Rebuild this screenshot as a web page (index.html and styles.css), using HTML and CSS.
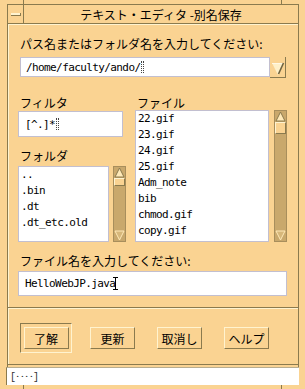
FILE: index.html
```html
<!DOCTYPE html>
<html lang="ja">

<head>
    <meta charset="UTF-8">
    <title>テキスト・エディタ -別名保存</title>
    <link rel="stylesheet" href="styles.css">
</head>

<body>

    <div class="screen">
        <div class="frame-ticks">
            <span class="tick"></span>
            <span class="tick"></span>
        </div>

        <div class="window">
            <div class="titlebar">
                <div class="menu-btn"><span class="menu-bar"></span></div>
                <div class="title">テキスト・エディタ -別名保存</div>
            </div>

            <div class="client">
                <div class="form">
                    <div class="label">パス名またはフォルダ名を入力してください:</div>
                    <div class="combo">
                        <div class="field path">/home/faculty/ando/<span class="cursor dotted"></span></div>
                        <div class="combo-arrow">
                            <svg width="14" height="15" viewBox="0 0 14 15">
                                <polygon points="1,3 13,3 7,15" fill="#fff0c8" />
                                <line x1="1" y1="3.5" x2="13" y2="3.5" stroke="#fff8e4" />
                                <line x1="12.5" y1="3" x2="7.5" y2="14" stroke="#6f6340" stroke-width="1.6" />
                            </svg>
                        </div>
                    </div>

                    <div class="lists">
                        <div class="col-left">
                            <div class="label">フィルタ</div>
                            <div class="field filter">[^.]*<span class="cursor dotted"></span></div>
                            <div class="label folder-label">フォルダ</div>
                            <div class="list-row">
                                <div class="listbox folders">
                                    <div class="item">..</div>
                                    <div class="item">.bin</div>
                                    <div class="item">.dt</div>
                                    <div class="item">.dt_etc.old</div>
                                </div>
                                <div class="scrollbar">
                                    <svg class="arrow" width="11" height="11" viewBox="0 0 11 11">
                                        <polygon points="5.5,1 10,10 1,10" fill="#ffe9b8" stroke="#8a7a4e" />
                                    </svg>
                                    <div class="slider short"></div>
                                    <div class="trough"></div>
                                    <svg class="arrow" width="11" height="11" viewBox="0 0 11 11">
                                        <polygon points="1,1 10,1 5.5,10" fill="#d7b77a" stroke="#ffe9b8" />
                                    </svg>
                                </div>
                            </div>
                        </div>

                        <div class="col-right">
                            <div class="label">ファイル</div>
                            <div class="list-row">
                                <div class="listbox files">
                                    <div class="item">22.gif</div>
                                    <div class="item">23.gif</div>
                                    <div class="item">24.gif</div>
                                    <div class="item">25.gif</div>
                                    <div class="item">Adm_note</div>
                                    <div class="item">bib</div>
                                    <div class="item">chmod.gif</div>
                                    <div class="item">copy.gif</div>
                                </div>
                                <div class="scrollbar">
                                    <svg class="arrow" width="11" height="11" viewBox="0 0 11 11">
                                        <polygon points="5.5,1 10,10 1,10" fill="#ffe9b8" stroke="#8a7a4e" />
                                    </svg>
                                    <div class="slider"></div>
                                    <div class="trough"></div>
                                    <svg class="arrow" width="11" height="11" viewBox="0 0 11 11">
                                        <polygon points="1,1 10,1 5.5,10" fill="#d7b77a" stroke="#ffe9b8" />
                                    </svg>
                                </div>
                            </div>
                        </div>
                    </div>

                    <div class="label name-label">ファイル名を入力してください:</div>
                    <div class="field name">HelloWebJP.java<span class="cursor ibeam"></span></div>
                </div>

                <div class="separator"></div>

                <div class="buttons">
                    <div class="default-ring"><button class="btn">了解</button></div>
                    <button class="btn">更新</button>
                    <button class="btn">取消し</button>
                    <button class="btn">ヘルプ</button>
                </div>
            </div>

            <div class="status"><span class="im-status">[‥‥]</span></div>
        </div>

        <div class="frame-ticks bottom">
            <span class="tick"></span>
            <span class="tick"></span>
        </div>
    </div>

</body>

</html>
```

FILE: styles.css
```css
body {
    margin: 0;
    background-color: #fad392;
    font-family: 'Noto Sans CJK JP', 'Noto Sans', sans-serif;
    font-size: 12px;
    color: #000;
}

.screen {
    width: 305px;
    height: 389px;
    overflow: hidden;
    display: flex;
    flex-direction: column;
}

/* frame resize handles */
.frame-ticks {
    height: 4px;
    padding: 0 23px;
    display: flex;
    justify-content: space-between;
}

.frame-ticks .tick {
    width: 1px;
    background: #8a7a4e;
}

.window {
    margin: 0 6px 0 7px;
    border: 1px solid #8a7a4e;
    border-bottom: none;
    flex: 1;
    display: flex;
    flex-direction: column;
}

.titlebar {
    height: 18px;
    display: flex;
    border-bottom: 1px solid #8a7a4e;
}

.menu-btn {
    width: 15px;
    border-right: 1px solid #8a7a4e;
    display: flex;
    align-items: center;
    justify-content: center;
}

.menu-bar {
    width: 9px;
    height: 2px;
    background: #fff3cf;
    border-bottom: 1px solid #8a7a4e;
    border-right: 1px solid #8a7a4e;
}

.title {
    flex: 1;
    text-align: center;
    line-height: 19px;
    white-space: pre;
}

.client {
    padding: 13px 0 11px 0;
    border-bottom: 1px solid #8a7a4e;
    box-shadow: inset 1px 1px 0 #fff3cf;
}

.form {
    padding: 0 10px 0 10px;
}

.label {
    line-height: 14px;
    height: 14px;
    padding-left: 2px;
    white-space: nowrap;
}

.field {
    background: #fff;
    border: 1px solid #c2bfd0;
    box-sizing: border-box;
    font-family: 'DejaVu Sans Mono', monospace;
    font-size: 11px;
    letter-spacing: -0.6px;
    padding-left: 5px;
    display: flex;
    align-items: center;
    white-space: pre;
}

.combo {
    margin-top: 6px;
    display: flex;
    padding-left: 2px;
}

.field.path {
    width: 250px;
    height: 20px;
}

.combo-arrow {
    width: 16px;
    height: 21px;
    box-sizing: border-box;
    border-right: 1px solid #8a7a4e;
    border-bottom: 1px solid #8a7a4e;
    display: flex;
    align-items: center;
    justify-content: center;
}

.cursor.dotted {
    width: 3px;
    height: 12px;
    margin-left: 1px;
    border-left: 1px dotted #444;
    border-right: 1px dotted #444;
    box-sizing: border-box;
}

.cursor.ibeam {
    width: 5px;
    height: 13px;
    margin-left: -2px;
    border-top: 1px solid #000;
    border-bottom: 1px solid #000;
    box-sizing: border-box;
    background: linear-gradient(#000, #000) center / 1px 100% no-repeat;
}

.lists {
    display: flex;
    margin-top: 18px;
}

.col-left {
    width: 108px;
    margin-right: 9px;
}

.col-right {
    flex: 1;
}

.field.filter {
    margin-top: 1px;
    width: 105px;
    height: 26px;
    padding-left: 6px;
}

.folder-label {
    margin-top: 12px;
}

.list-row {
    display: flex;
    margin-top: 3px;
    gap: 4px;
}

.col-right .list-row {
    margin-top: 0;
    gap: 5px;
}

.listbox {
    background: #fff;
    border: 1px solid #c2bfd0;
    box-sizing: border-box;
    padding-left: 2px;
    font-family: 'DejaVu Sans Mono', monospace;
    font-size: 11px;
    letter-spacing: -0.6px;
    line-height: 16px;
    overflow: hidden;
}

.listbox.folders {
    width: 91px;
    height: 76px;
}

.listbox.files {
    width: 134px;
    height: 132px;
}

.scrollbar {
    width: 13px;
    box-sizing: border-box;
    background: #c9a86c;
    border: 1px solid #a88e5c;
    display: flex;
    flex-direction: column;
    align-items: center;
}

.scrollbar .arrow {
    flex: none;
}

.slider {
    width: 11px;
    height: 12px;
    box-sizing: border-box;
    background: #fad392;
    border-top: 1px solid #fff3cf;
    border-left: 1px solid #fff3cf;
    border-bottom: 1px solid #8a7a4e;
    border-right: 1px solid #8a7a4e;
}

.slider.short {
    height: 8px;
}

.trough {
    flex: 1;
}

.name-label {
    margin-top: 12px;
}

.field.name {
    margin-top: 3px;
    width: 269px;
    height: 25px;
    padding-left: 6px;
}

.separator {
    margin-top: 11px;
    height: 1px;
    border-top: 1px solid #8a7a4e;
    background: #fff3cf;
}

.buttons {
    margin-top: 14px;
    display: flex;
    align-items: center;
    padding-left: 12px;
    gap: 22px;
}

.default-ring {
    width: 52px;
    height: 30px;
    box-sizing: border-box;
    border-top: 1px solid #8a7a4e;
    border-left: 1px solid #8a7a4e;
    border-bottom: 1px solid #fff3cf;
    border-right: 1px solid #fff3cf;
    display: flex;
    align-items: center;
    justify-content: center;
    margin-right: -4px;
}

.btn {
    width: 45px;
    height: 22px;
    padding: 0;
    background: #fad392;
    border-top: 1px solid #fff3cf;
    border-left: 1px solid #fff3cf;
    border-bottom: 1px solid #8a7a4e;
    border-right: 1px solid #8a7a4e;
    font-family: 'Noto Sans CJK JP', 'Noto Sans', sans-serif;
    font-size: 12px;
    color: #000;
}

.status {
    margin: 2px -1px 0 -2px;
    height: 17px;
    background: #fff;
    border-left: 1px solid #8a7a4e;
    border-top: 1px solid #b8ad90;
    display: flex;
    align-items: center;
    padding-left: 3px;
}

.im-status {
    font-family: 'Liberation Mono', monospace;
    font-size: 10px;
    letter-spacing: -1px;
    color: #333;
}

.frame-ticks.bottom {
    height: 4px;
}
```
